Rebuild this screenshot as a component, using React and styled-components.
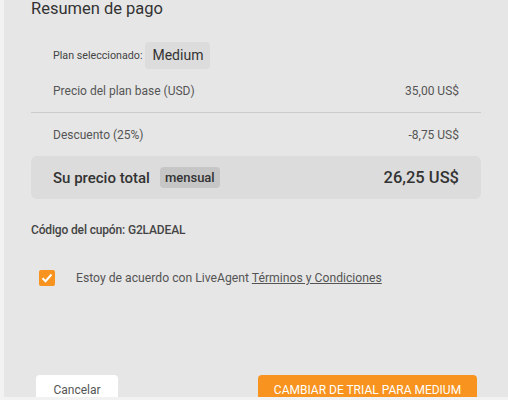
import React from 'react'
import styled, { createGlobalStyle } from 'styled-components'

const Global = createGlobalStyle`
  body {
    margin: 0;
    background: #f2f2f2;
    font-family: Roboto, "Liberation Sans", sans-serif;
    overflow: hidden;
  }
`

export default function App() {
  return (
    <>
      <Global />
      <Panel>
        <Title>Resumen de pago</Title>
        <PlanRow>
          <PlanLabel>Plan seleccionado:</PlanLabel>
          <PlanBadge>Medium</PlanBadge>
        </PlanRow>
        <Row divider>
          <span>Precio del plan base (USD)</span>
          <Amount>35,00 US$</Amount>
        </Row>
        <Row>
          <span>Descuento (25%)</span>
          <Amount>-8,75 US$</Amount>
        </Row>
        <TotalBox>
          <TotalLabel>
            Su precio total
            <PeriodBadge>mensual</PeriodBadge>
          </TotalLabel>
          <TotalAmount>26,25 US$</TotalAmount>
        </TotalBox>
        <Coupon>Código del cupón: G2LADEAL</Coupon>
        <AgreeRow>
          <Check>
            <svg width="12" height="10" viewBox="0 0 12 10">
              <path d="M1.5 5.2 L4.5 8.2 L10.5 1.5" fill="none" stroke="#fff" strokeWidth="2" />
            </svg>
          </Check>
          <AgreeText>
            Estoy de acuerdo con LiveAgent <Link>Términos y Condiciones</Link>
          </AgreeText>
        </AgreeRow>
        <Buttons>
          <CancelButton>Cancelar</CancelButton>
          <PrimaryButton>Cambiar de trial para Medium</PrimaryButton>
        </Buttons>
      </Panel>
    </>
  )
}

const Panel = styled.div`
  margin-left: 4px;
  height: 400px;
  background: #e6e6e6;
  padding: 0 27px;
  box-sizing: border-box;
`

const Title = styled.h2`
  margin: -3px 0 0;
  font-size: 16.5px;
  line-height: 24px;
  font-weight: 400;
  color: #333;
`

const PlanRow = styled.div`
  display: flex;
  align-items: center;
  gap: 3px;
  margin-top: 21px;
  padding: 0 22px;
  height: 27px;
`

const PlanLabel = styled.span`
  font-size: 10.7px;
  color: #444;
`

const PlanBadge = styled.span`
  background: #dcdcdc;
  border-radius: 4px;
  padding: 0 7px;
  height: 27px;
  line-height: 27px;
  font-size: 14px;
  color: #333;
`

const Row = styled.div`
  display: flex;
  justify-content: space-between;
  align-items: center;
  height: 43px;
  padding: 0 22px;
  font-size: 12px;
  color: #555;
  border-bottom: ${p => (p.divider ? '1px solid #cccccc' : 'none')};
`

const Amount = styled.span`
  color: #555;
`

const TotalBox = styled.div`
  display: flex;
  justify-content: space-between;
  align-items: center;
  height: 43px;
  padding: 0 22px;
  background: #dcdcdc;
  border-radius: 6px;
`

const TotalLabel = styled.span`
  display: flex;
  align-items: center;
  gap: 10px;
  font-size: 15px;
  font-weight: 500;
  color: #333;
`

const PeriodBadge = styled.span`
  background: #c6c6c6;
  border-radius: 4px;
  padding: 0 5px;
  height: 21px;
  line-height: 21px;
  font-size: 13px;
  font-weight: 500;
  color: #333;
`

const TotalAmount = styled.span`
  font-size: 16.5px;
  font-weight: 500;
  color: #333;
`

const Coupon = styled.div`
  margin-top: 21px;
  font-size: 12px;
  letter-spacing: -0.15px;
  line-height: 20px;
  font-weight: 500;
  color: #444;
`

const AgreeRow = styled.div`
  display: flex;
  align-items: center;
  margin-top: 30px;
  padding-left: 8px;
  height: 16px;
`

const Check = styled.span`
  display: flex;
  align-items: center;
  justify-content: center;
  width: 16px;
  height: 16px;
  border-radius: 2px;
  background: #f7931e;
  margin-right: 21px;
`

const AgreeText = styled.span`
  font-size: 12.2px;
  color: #555;
`

const Link = styled.span`
  text-decoration: underline;
`

const Buttons = styled.div`
  display: flex;
  justify-content: space-between;
  margin-top: 89px;
  padding: 0 4px 0 5px;
`

const CancelButton = styled.button`
  width: 82px;
  height: 30px;
  border: none;
  border-radius: 4px;
  background: #fff;
  font-family: inherit;
  font-size: 12px;
  color: #555;
`

const PrimaryButton = styled.button`
  width: 219px;
  height: 30px;
  border: none;
  border-radius: 4px;
  background: #f7931e;
  font-family: inherit;
  font-size: 12px;
  font-weight: 400;
  text-transform: uppercase;
  color: #fff;
`
